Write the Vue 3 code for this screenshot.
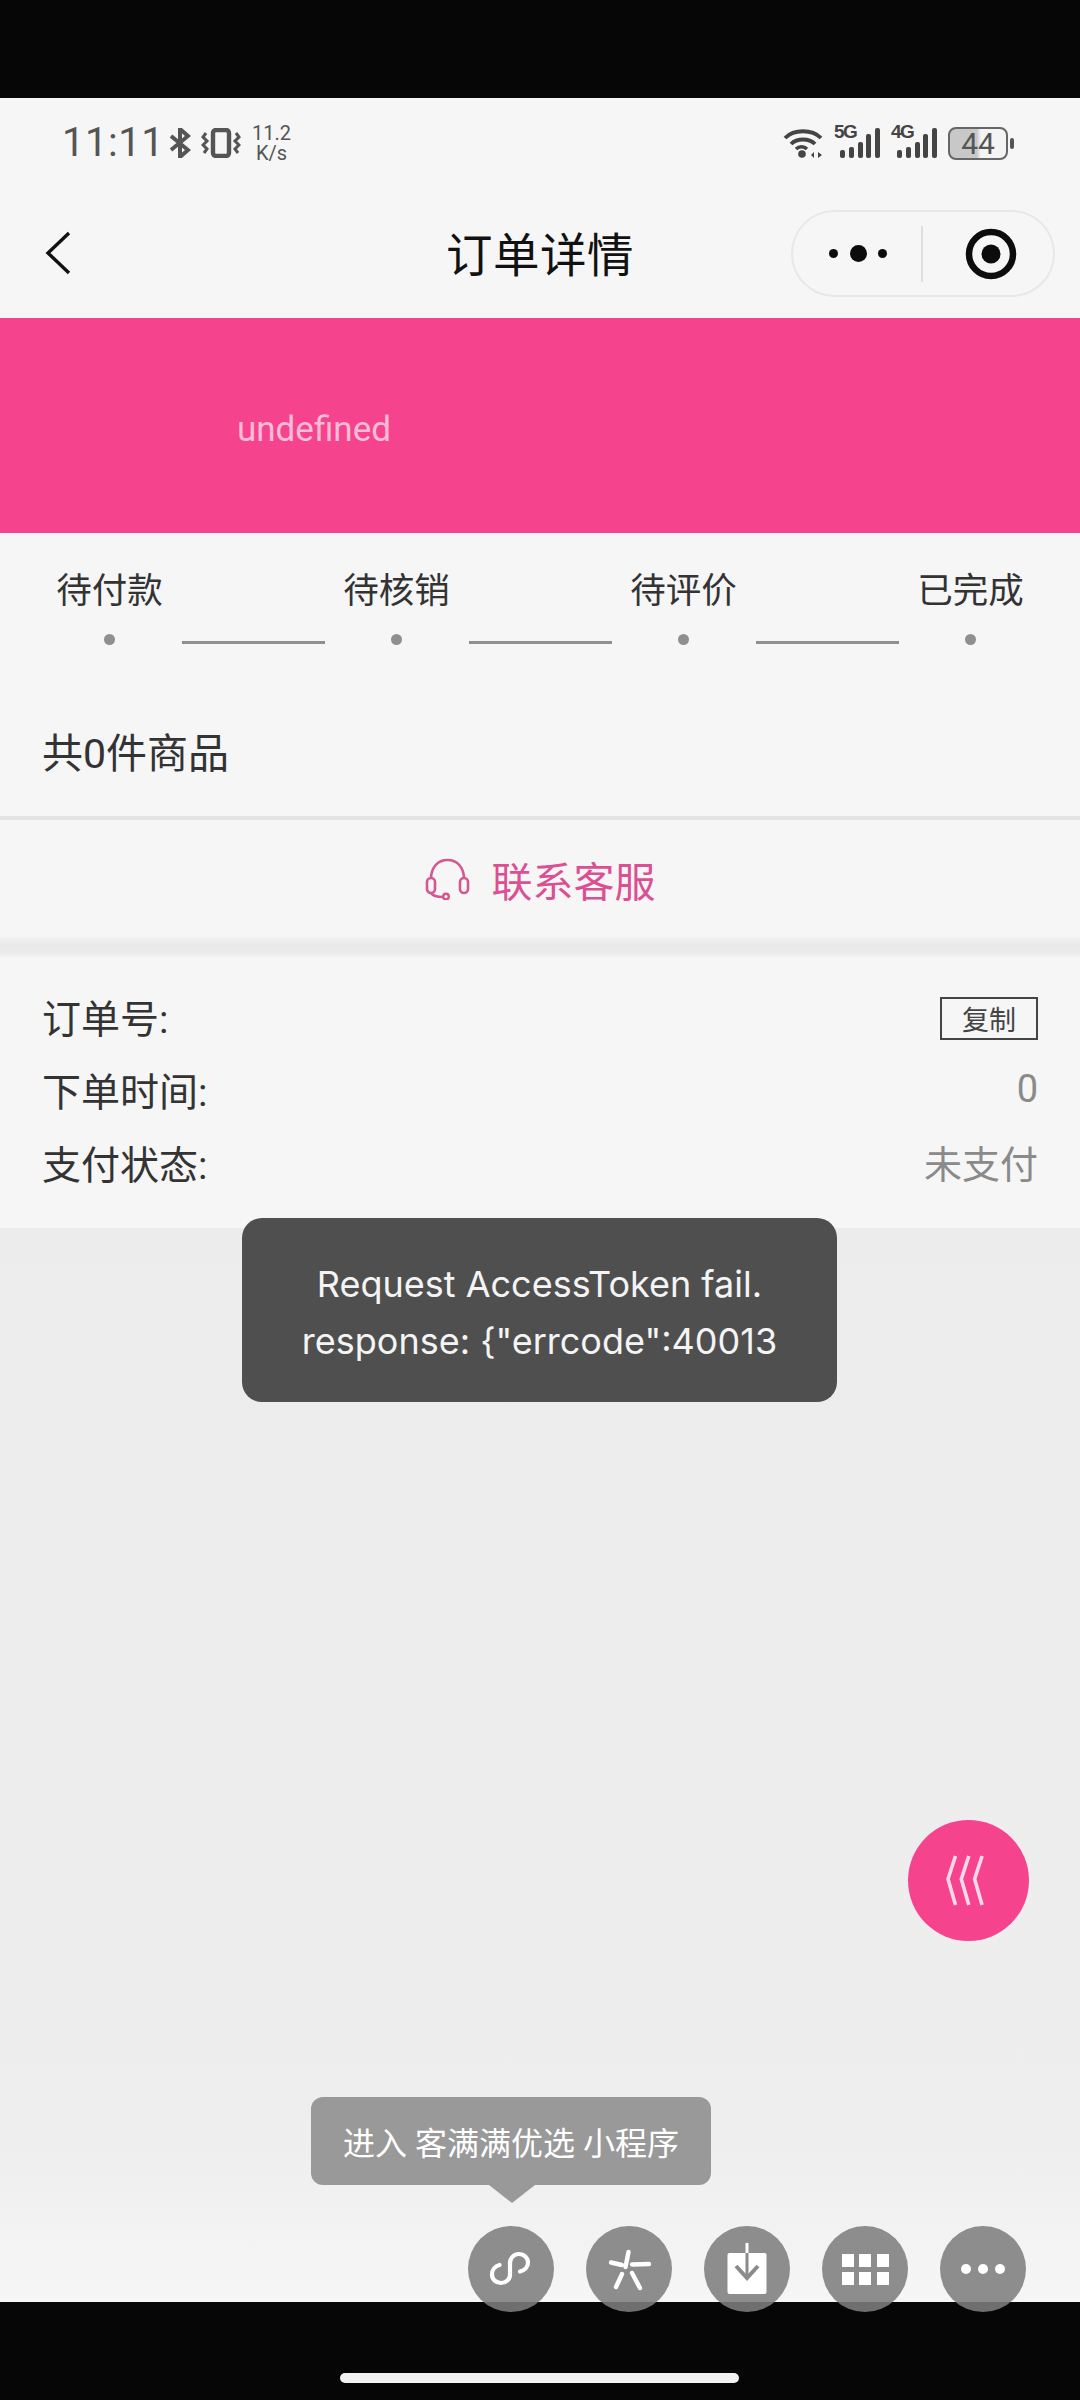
<template>
  <div class="screen">
    <div class="page">
      <!-- status bar -->
      <div class="status-bar">
        <div class="status-left">
          <span class="time">11:11</span>
          <svg class="ic-bt" viewBox="0 0 22 30" width="22" height="30">
            <path d="M2 8 L19 22 L11 29 V1 L19 8 L2 22" fill="none" stroke="#555" stroke-width="4" />
          </svg>
          <svg class="ic-vib" viewBox="0 0 40 30" width="40" height="30">
            <rect x="12" y="2" width="16" height="26" rx="3" fill="none" stroke="#555" stroke-width="4.4" />
            <path d="M5 5 L2 9 L6 13 L2 17 L6 21 L3 25" fill="none" stroke="#555" stroke-width="3" />
            <path d="M35 5 L38 9 L34 13 L38 17 L34 21 L37 25" fill="none" stroke="#555" stroke-width="3" />
          </svg>
          <div class="speed"><span>11.2</span><span>K/s</span></div>
        </div>
        <div class="status-right">
          <svg viewBox="0 0 40 30" width="40" height="30">
            <path d="M2 10 C11 1 29 1 38 10" fill="none" stroke="#444" stroke-width="3.8" />
            <path d="M8 16 C14 10 26 10 32 16" fill="none" stroke="#444" stroke-width="3.8" />
            <path d="M13 21 C16 18 21 18 24 21" fill="none" stroke="#444" stroke-width="3.4" />
            <circle cx="19" cy="26" r="3.8" fill="#444" />
            <path d="M28 27 L31 24 V30 Z M39 27 L35 24 V30 Z" fill="#444" />
          </svg>
          <div v-for="net in networks" :key="net" class="signal">
            <span class="net">{{ net }}</span>
            <svg viewBox="0 0 46 32" width="46" height="32">
              <rect x="6" y="23" width="5" height="8" rx="2" fill="#444" />
              <rect x="15" y="20" width="5" height="11" rx="2" fill="#444" />
              <rect x="24" y="15" width="5" height="16" rx="2" fill="#444" />
              <rect x="32" y="7" width="5" height="24" rx="2" fill="#444" />
              <rect x="41" y="1" width="5" height="30" rx="2" fill="#444" />
            </svg>
          </div>
          <div class="battery">
            <div class="battery-body"><span>44</span></div>
            <i class="battery-nub"></i>
          </div>
        </div>
      </div>

      <!-- nav -->
      <div class="nav">
        <svg class="back" viewBox="0 0 26 44" width="26" height="44">
          <path d="M24 2 L3 22 L24 42" fill="none" stroke="#111" stroke-width="3.4" />
        </svg>
        <div class="nav-title">订单详情</div>
        <div class="capsule">
          <div class="capsule-dots"><i></i><i class="big"></i><i></i></div>
          <div class="capsule-sep"></div>
          <svg viewBox="0 0 54 54" width="54" height="54">
            <circle cx="27" cy="27" r="22" fill="none" stroke="#0c0c0c" stroke-width="6.5" />
            <circle cx="27" cy="27" r="9.5" fill="#0c0c0c" />
          </svg>
        </div>
      </div>

      <div class="banner"><span>undefined</span></div>

      <!-- order progress -->
      <div class="steps">
        <template v-for="(step, i) in steps" :key="step">
          <div class="step">
            <div class="step-label">{{ step }}</div>
            <div class="step-dot"></div>
          </div>
          <div v-if="i < steps.length - 1" class="step-line"></div>
        </template>
      </div>

      <div class="goods">共0件商品</div>

      <div class="service">
        <svg viewBox="0 0 45 42" width="45" height="42">
          <path d="M6 21 C6 9 13 2 22.5 2 C32 2 39 9 39 21" fill="none" stroke="#d4578f" stroke-width="2.6" />
          <rect x="2" y="20" width="8" height="15" rx="4" fill="none" stroke="#d4578f" stroke-width="2.6" />
          <rect x="35" y="20" width="8" height="15" rx="4" fill="none" stroke="#d4578f" stroke-width="2.6" />
          <path d="M6 35 C8 38 12 39 18 39" fill="none" stroke="#d4578f" stroke-width="2.6" />
          <circle cx="21" cy="38.5" r="2.8" fill="none" stroke="#d4578f" stroke-width="2.4" />
        </svg>
        <span>联系客服</span>
      </div>

      <div class="band"></div>

      <div class="info">
        <div class="info-row">
          <span>订单号:</span>
          <span class="copy">复制</span>
        </div>
        <div class="info-row">
          <span>下单时间:</span>
          <span class="value">0</span>
        </div>
        <div class="info-row">
          <span>支付状态:</span>
          <span class="value">未支付</span>
        </div>
      </div>

      <div class="rest"></div>
    </div>

    <!-- overlays -->
    <div class="toast">
      <div>Request AccessToken fail.</div>
      <div>response: {"errcode":40013</div>
    </div>

    <div class="fab">
      <svg viewBox="0 0 121 121" width="121" height="121">
        <path
          v-for="x in [0, 13.3, 26.6]"
          :key="x"
          :transform="`translate(${x} 0)`"
          d="M47.5 36 L40 59 L47.5 85"
          fill="none"
          stroke="#ffd9ea"
          stroke-width="3.6"
        />
      </svg>
    </div>

    <div class="tip">进入 客满满优选 小程序</div>

    <div class="float-actions">
      <div class="action">
        <svg viewBox="0 0 48 48" width="48" height="48">
          <path d="M12.5 20 C8 21 5 25 5 29.5 C5 34.5 9 38 14 38 C19 38 23 34 23 30 L23 18 C23 13 27 9 32 9 C37 9 41 13 41 17.5 C41 22 37.5 25.5 33 26.5" fill="none" stroke="#fff" stroke-width="4.2" stroke-linecap="round" />
        </svg>
      </div>
      <div class="action">
        <svg viewBox="0 0 48 48" width="48" height="48">
          <g fill="none" stroke="#fff" stroke-linecap="round" stroke-width="4.4">
            <path d="M23.5 7 L20.5 22" />
            <path d="M27 19.5 L44 19" />
            <path d="M6 17.5 L17 20" />
            <path d="M17 29 L11 42" />
            <path d="M27 28 L35 43" />
          </g>
        </svg>
      </div>
      <div class="action">
        <svg viewBox="0 0 48 60" width="48" height="60">
          <rect x="4.5" y="14" width="39" height="41" rx="2" fill="#fff" />
          <path d="M24 4 V14" stroke="#fff" stroke-width="3" />
          <path d="M24 14 V39" stroke="#8b8b8b" stroke-width="3" />
          <path d="M13 27 L24 39 L35 27" fill="none" stroke="#8b8b8b" stroke-width="4" />
        </svg>
      </div>
      <div class="action">
        <div class="mini-grid"><i v-for="n in 6" :key="n"></i></div>
      </div>
      <div class="action">
        <div class="mini-dots"><i></i><i></i><i></i></div>
      </div>
    </div>

    <div class="home-bar"></div>
  </div>
</template>

<script setup>
const networks = ['5G', '4G']
const steps = ['待付款', '待核销', '待评价', '已完成']
</script>

<style>
html,
body {
  margin: 0;
  background: #000;
}
</style>

<style scoped>
.screen {
  position: relative;
  width: 1080px;
  height: 2400px;
  padding: 98px 0 98px;
  box-sizing: border-box;
  background: #060606;
  overflow: hidden;
  font-family: Roboto, "Noto Sans CJK SC", sans-serif;
  color: #333;
}

.page {
  height: 100%;
  display: flex;
  flex-direction: column;
  background: #f6f6f6;
}

/* status bar */
.status-bar {
  height: 90px;
  flex: none;
  display: flex;
  align-items: center;
  justify-content: space-between;
  padding: 0 66px 0 62px;
}

.status-left,
.status-right {
  display: flex;
  align-items: center;
}

.time {
  font-size: 40px;
  letter-spacing: 0.5px;
  color: #555;
  line-height: 1;
  width: 107px;
}

.ic-vib {
  margin-left: 10px;
}

.speed {
  margin-left: 11px;
  display: flex;
  flex-direction: column;
  align-items: center;
  font-size: 20px;
  line-height: 20px;
  color: #555;
}

.status-right {
  gap: 11px;
}

.signal {
  position: relative;
  width: 46px;
  height: 32px;
}

.signal svg {
  display: block;
}

.net {
  position: absolute;
  left: 0;
  top: -5px;
  font-family: "Liberation Sans", sans-serif;
  font-size: 19px;
  font-weight: 700;
  line-height: 20px;
  letter-spacing: -1.5px;
  color: #444;
}

.battery {
  display: flex;
  align-items: center;
  gap: 2px;
}

.battery-body {
  width: 60px;
  height: 33px;
  box-sizing: border-box;
  border: 2.5px solid #666;
  border-radius: 8px;
  display: flex;
  align-items: center;
  justify-content: center;
  background: linear-gradient(90deg, #c8c8c8 48%, #f4f4f4 55%);
  font-size: 30px;
  color: #555;
}

.battery-nub {
  width: 4px;
  height: 11px;
  background: #555;
  border-radius: 2px;
}

/* nav */
.nav {
  position: relative;
  height: 130px;
  flex: none;
  display: flex;
  align-items: center;
  justify-content: center;
}

.back {
  position: absolute;
  left: 45px;
  top: 43px;
}

.nav-title {
  font-size: 46.5px;
  color: #111;
  padding-bottom: 3px;
  letter-spacing: 0.5px;
}

.capsule {
  position: absolute;
  left: 791px;
  top: 22px;
  width: 264px;
  height: 87px;
  box-sizing: border-box;
  border: 2px solid #e8e8e8;
  border-radius: 44px;
  display: flex;
  align-items: center;
  padding-left: 36px;
}

.capsule-dots {
  width: 58px;
  display: flex;
  align-items: center;
  justify-content: space-between;
}

.capsule-dots i {
  width: 9px;
  height: 9px;
  border-radius: 50%;
  background: #0c0c0c;
}

.capsule-dots i.big {
  width: 17px;
  height: 17px;
}

.capsule-sep {
  width: 2px;
  height: 56px;
  background: #dedede;
  margin: 0 41px 0 34px;
}

.banner {
  height: 215px;
  flex: none;
  background: #f6438d;
  display: flex;
  align-items: center;
  padding: 8px 0 0 237px;
  box-sizing: border-box;
  font-size: 35px;
  color: #f9bcd6;
}

/* steps */
.steps {
  height: 147px;
  flex: none;
  box-sizing: border-box;
  padding: 37px 56px 0;
  display: flex;
  align-items: flex-start;
  justify-content: space-between;
}

.step {
  width: 107px;
  display: flex;
  flex-direction: column;
  align-items: center;
  gap: 22px;
}

.step-label {
  font-size: 35.5px;
  line-height: 42px;
  white-space: nowrap;
  color: #333;
}

.step-dot {
  width: 11px;
  height: 11px;
  border-radius: 50%;
  background: #8f8f8f;
}

.step-line {
  width: 143px;
  height: 3px;
  background: #8f8f8f;
  margin-top: 71px;
}

.goods {
  height: 140px;
  flex: none;
  box-sizing: border-box;
  padding: 4px 0 0 42px;
  display: flex;
  align-items: center;
  font-size: 41px;
  color: #333;
  border-bottom: 4px solid #e3e3e3;
}

.service {
  height: 117px;
  flex: none;
  display: flex;
  align-items: center;
  justify-content: center;
  gap: 22px;
  font-size: 41px;
  color: #dc4f92;
}

.band {
  height: 20px;
  flex: none;
  background: linear-gradient(180deg, #f3f3f3 0%, #e9e9e9 40%, #ebebeb 80%, #f3f3f3 100%);
}

.info {
  flex: none;
  padding: 22px 42px 0 42px;
  height: 271px;
  box-sizing: border-box;
}

.info-row {
  height: 73px;
  display: flex;
  align-items: center;
  justify-content: space-between;
  font-size: 39px;
  color: #333;
}

.value {
  color: #8a8a8a;
  font-size: 38px;
}

.copy {
  width: 98px;
  height: 43px;
  margin-top: 6px;
  box-sizing: border-box;
  border: 2px solid #444;
  display: flex;
  align-items: center;
  justify-content: center;
  font-size: 27px;
  color: #444;
}

.rest {
  flex: 1;
  background: linear-gradient(180deg, #ececec 0%, #eeeeee 85%, #f6f6f6 100%);
}

/* overlays */
.toast {
  position: absolute;
  left: 242px;
  top: 1218px;
  width: 595px;
  height: 184px;
  box-sizing: border-box;
  padding-top: 38px;
  border-radius: 20px;
  background: #4f4f4f;
  color: #f4f4f4;
  font-family: Inter, "Noto Sans CJK SC", sans-serif;
  font-size: 36px;
  line-height: 57px;
  text-align: center;
}

.fab {
  position: absolute;
  left: 908px;
  top: 1820px;
  width: 121px;
  height: 121px;
  border-radius: 50%;
  background: #f6438d;
}

.fab svg {
  display: block;
}

.tip {
  position: absolute;
  left: 311px;
  top: 2097px;
  width: 400px;
  height: 88px;
  border-radius: 12px;
  background: #999;
  color: #fff;
  font-size: 32px;
  display: flex;
  align-items: center;
  justify-content: center;
}

.tip::after {
  content: "";
  position: absolute;
  left: 178px;
  top: 100%;
  border-left: 23px solid transparent;
  border-right: 23px solid transparent;
  border-top: 18px solid #999;
}

.float-actions {
  position: absolute;
  left: 468px;
  top: 2226px;
  display: flex;
  gap: 32px;
}

.action {
  width: 86px;
  height: 86px;
  border-radius: 50%;
  background: rgba(126, 126, 126, 0.88);
  display: flex;
  align-items: center;
  justify-content: center;
}

.mini-grid {
  display: grid;
  grid-template-columns: repeat(3, 12px);
  grid-auto-rows: 13px;
  column-gap: 5.5px;
  row-gap: 5px;
}

.mini-grid i {
  background: #fff;
}

.mini-dots {
  display: flex;
  gap: 7px;
}

.mini-dots i {
  width: 10px;
  height: 10px;
  border-radius: 50%;
  background: #fff;
}

.home-bar {
  position: absolute;
  left: 340px;
  top: 2373px;
  width: 399px;
  height: 10px;
  border-radius: 5px;
  background: #f2f2f2;
}
</style>
